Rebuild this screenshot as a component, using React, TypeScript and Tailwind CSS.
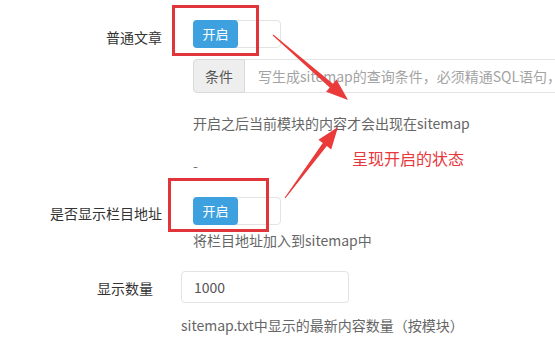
import React from "react";

const font = { fontFamily: '"Noto Sans CJK SC", "Noto Sans", sans-serif' };

function Switch() {
  return (
    <div className="flex h-[28px] w-[88px] shrink-0 rounded-[4px] border border-[#e3e3e3] bg-white">
      <div className="-ml-px -mt-px flex h-[28px] w-[45px] shrink-0 items-center justify-center rounded-[4px] bg-[#3ea1df] text-[13px] text-white">
        开启
      </div>
    </div>
  );
}

export default function App() {
  return (
    <div
      className="relative h-[343px] w-[555px] overflow-hidden bg-white text-[14px] text-[#333]"
      style={font}
    >
      <div className="flex flex-col pt-[20px]">
        <div className="flex items-start">
          <div className="w-[162px] shrink-0 pt-[7px] text-right leading-[20px]">普通文章</div>
          <div className="ml-[31px] flex shrink-0 flex-col">
            <Switch />
            <div className="mt-[11px] flex h-[34px] w-[400px]">
              <div className="flex w-[52px] shrink-0 items-center justify-center rounded-l-[4px] border border-[#d9d9d9] bg-[#eeeeee] text-[#555]">
                条件
              </div>
              <div className="flex flex-1 items-center whitespace-nowrap border-y border-[#e3e3e3] pl-[13px] text-[#a3a3a3]">
                写生成sitemap的查询条件，必须精通SQL语句，
              </div>
            </div>
            <div className="mt-[20px] whitespace-nowrap leading-[20px] text-[#666]">
              开启之后当前模块的内容才会出现在sitemap
            </div>
            <div className="mt-[22px] leading-[20px] text-[#777]">-</div>
          </div>
        </div>
        <div className="mt-[22px] flex items-start">
          <div className="w-[162px] shrink-0 pt-[6px] text-right leading-[20px]">是否显示栏目地址</div>
          <div className="ml-[31px] flex shrink-0 flex-col">
            <Switch />
            <div className="mt-[5px] whitespace-nowrap leading-[20px] text-[#666]">
              将栏目地址加入到sitemap中
            </div>
          </div>
        </div>
        <div className="mt-[21px] flex items-start">
          <div className="w-[153px] shrink-0 pt-[7px] text-right leading-[20px]">显示数量</div>
          <div className="ml-[28px] flex shrink-0 flex-col">
            <div className="flex h-[32px] w-[168px] items-center rounded-[4px] border border-[#e3e3e3] pl-[12px] text-[#555]">
              1000
            </div>
            <div className="mt-[12px] whitespace-nowrap leading-[20px] text-[#666]">
              sitemap.txt中显示的最新内容数量（按模块）
            </div>
          </div>
        </div>
      </div>

      <div className="absolute left-[172px] top-[5px] h-[51px] w-[87px] border-[3px] border-[#e0353b]" />
      <div className="absolute left-[168px] top-[178px] h-[54px] w-[101px] border-[3px] border-[#e0353b]" />
      <div className="absolute left-[352px] top-[147px] text-[16px] leading-[22px] text-[#e8383d]">
        呈现开启的状态
      </div>
      <svg className="absolute left-0 top-0" width="555" height="343" viewBox="0 0 555 343">
        <polygon
          fill="#ea3a3a"
          points="272.7,35.4 329.7,87.5 326.1,91.7 348,100 336.5,79.5 332.9,83.7 273.3,34.6"
        />
        <polygon
          fill="#ea3a3a"
          points="285.4,198.3 326.8,146.1 331.2,149.4 338,127 318.4,139.8 322.8,143.1 284.6,197.7"
        />
      </svg>
    </div>
  );
}
